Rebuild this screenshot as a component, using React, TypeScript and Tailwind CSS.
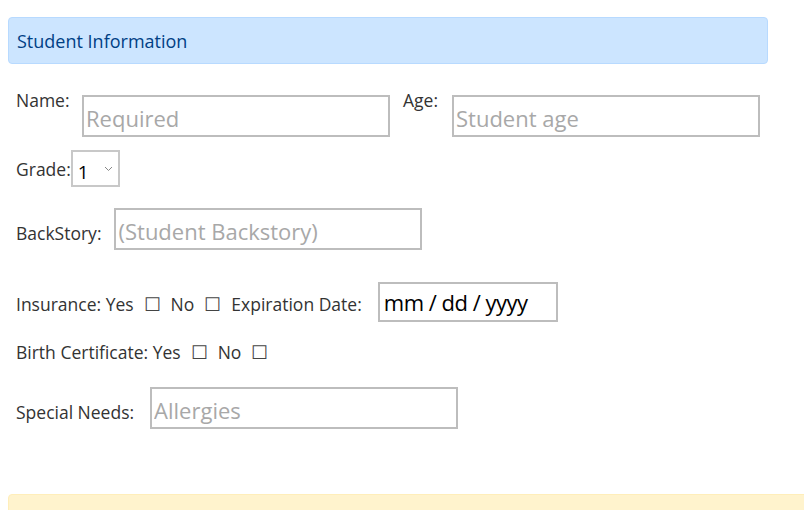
import React from 'react';

const font = { fontFamily: '"Open Sans", "Noto Sans", sans-serif' };

const Box = ({ placeholder }: { placeholder: string }) => (
  <input
    readOnly
    placeholder={placeholder}
    className="h-[42px] w-[308px] border-2 border-[#bdbdbd] bg-white px-[2px] pt-[4px] text-[22px] text-black placeholder:text-[#a8a8a8] outline-none"
    style={font}
  />
);

const Check = () => <span className="mx-[10px] text-[19px] leading-none text-[#444]">☐</span>;

const App: React.FC = () => {
  return (
    <div className="min-h-[510px] bg-white px-2 text-[17.5px] leading-[24px] text-[#333]" style={font}>
      <div className="pt-[17px]">
        <div className="flex h-[47px] w-[760px] items-center rounded-[4px] border border-[#b8daff] bg-[#cce5ff] px-[8px] text-[18px] text-[#004085]">
          Student Information
        </div>
      </div>

      <div className="mt-[24px] flex items-start pl-[8px]">
        <label className="w-[66px]">Name:</label>
        <div className="mt-[7px]"><Box placeholder="Required" /></div>
        <label className="ml-[13px] w-[49px]">Age:</label>
        <div className="mt-[7px]"><Box placeholder="Student age" /></div>
      </div>

      <div className="mt-[13px] flex items-center pl-[8px]">
        <label>Grade:</label>
        <div className="flex h-[37px] w-[49px] items-center justify-between border-2 border-[#c8c8c8] pl-[5px] pr-[5px]">
          <span className="mt-[6px] text-[19px] text-black">1</span>
          <svg width="9" height="6" viewBox="0 0 9 6" className="text-[#888]">
            <path d="M1 1l3.5 3.5L8 1" fill="none" stroke="currentColor" strokeWidth="1" />
          </svg>
        </div>
      </div>

      <div className="mt-[21px] flex items-baseline pl-[8px]">
        <label className="mr-[13px]">BackStory:</label>
        <Box placeholder="(Student Backstory)" />
      </div>

      <div className="mt-[32px] flex items-baseline pl-[8px]">
        <span>Insurance: Yes</span>
        <Check />
        <span>No</span>
        <Check />
        <span>Expiration Date:</span>
        <input
          readOnly
          value="mm / dd / yyyy"
          className="ml-[16px] h-[40px] w-[180px] border-2 border-[#bdbdbd] px-[4px] text-[22px] tracking-[-0.5px] text-black outline-none"
          style={font}
        />
      </div>

      <div className="mt-[18px] flex items-baseline pl-[8px]">
        <span>Birth Certificate: Yes</span>
        <Check />
        <span>No</span>
        <Check />
      </div>

      <div className="mt-[23px] flex items-baseline pl-[8px]">
        <label className="mr-[16px]">Special Needs:</label>
        <Box placeholder="Allergies" />
      </div>

      <div className="mt-[65px] h-[30px] w-[800px] rounded-t-[4px] border border-[#ffeeba] bg-[#fff3cd]" />
    </div>
  );
};

export default App;
